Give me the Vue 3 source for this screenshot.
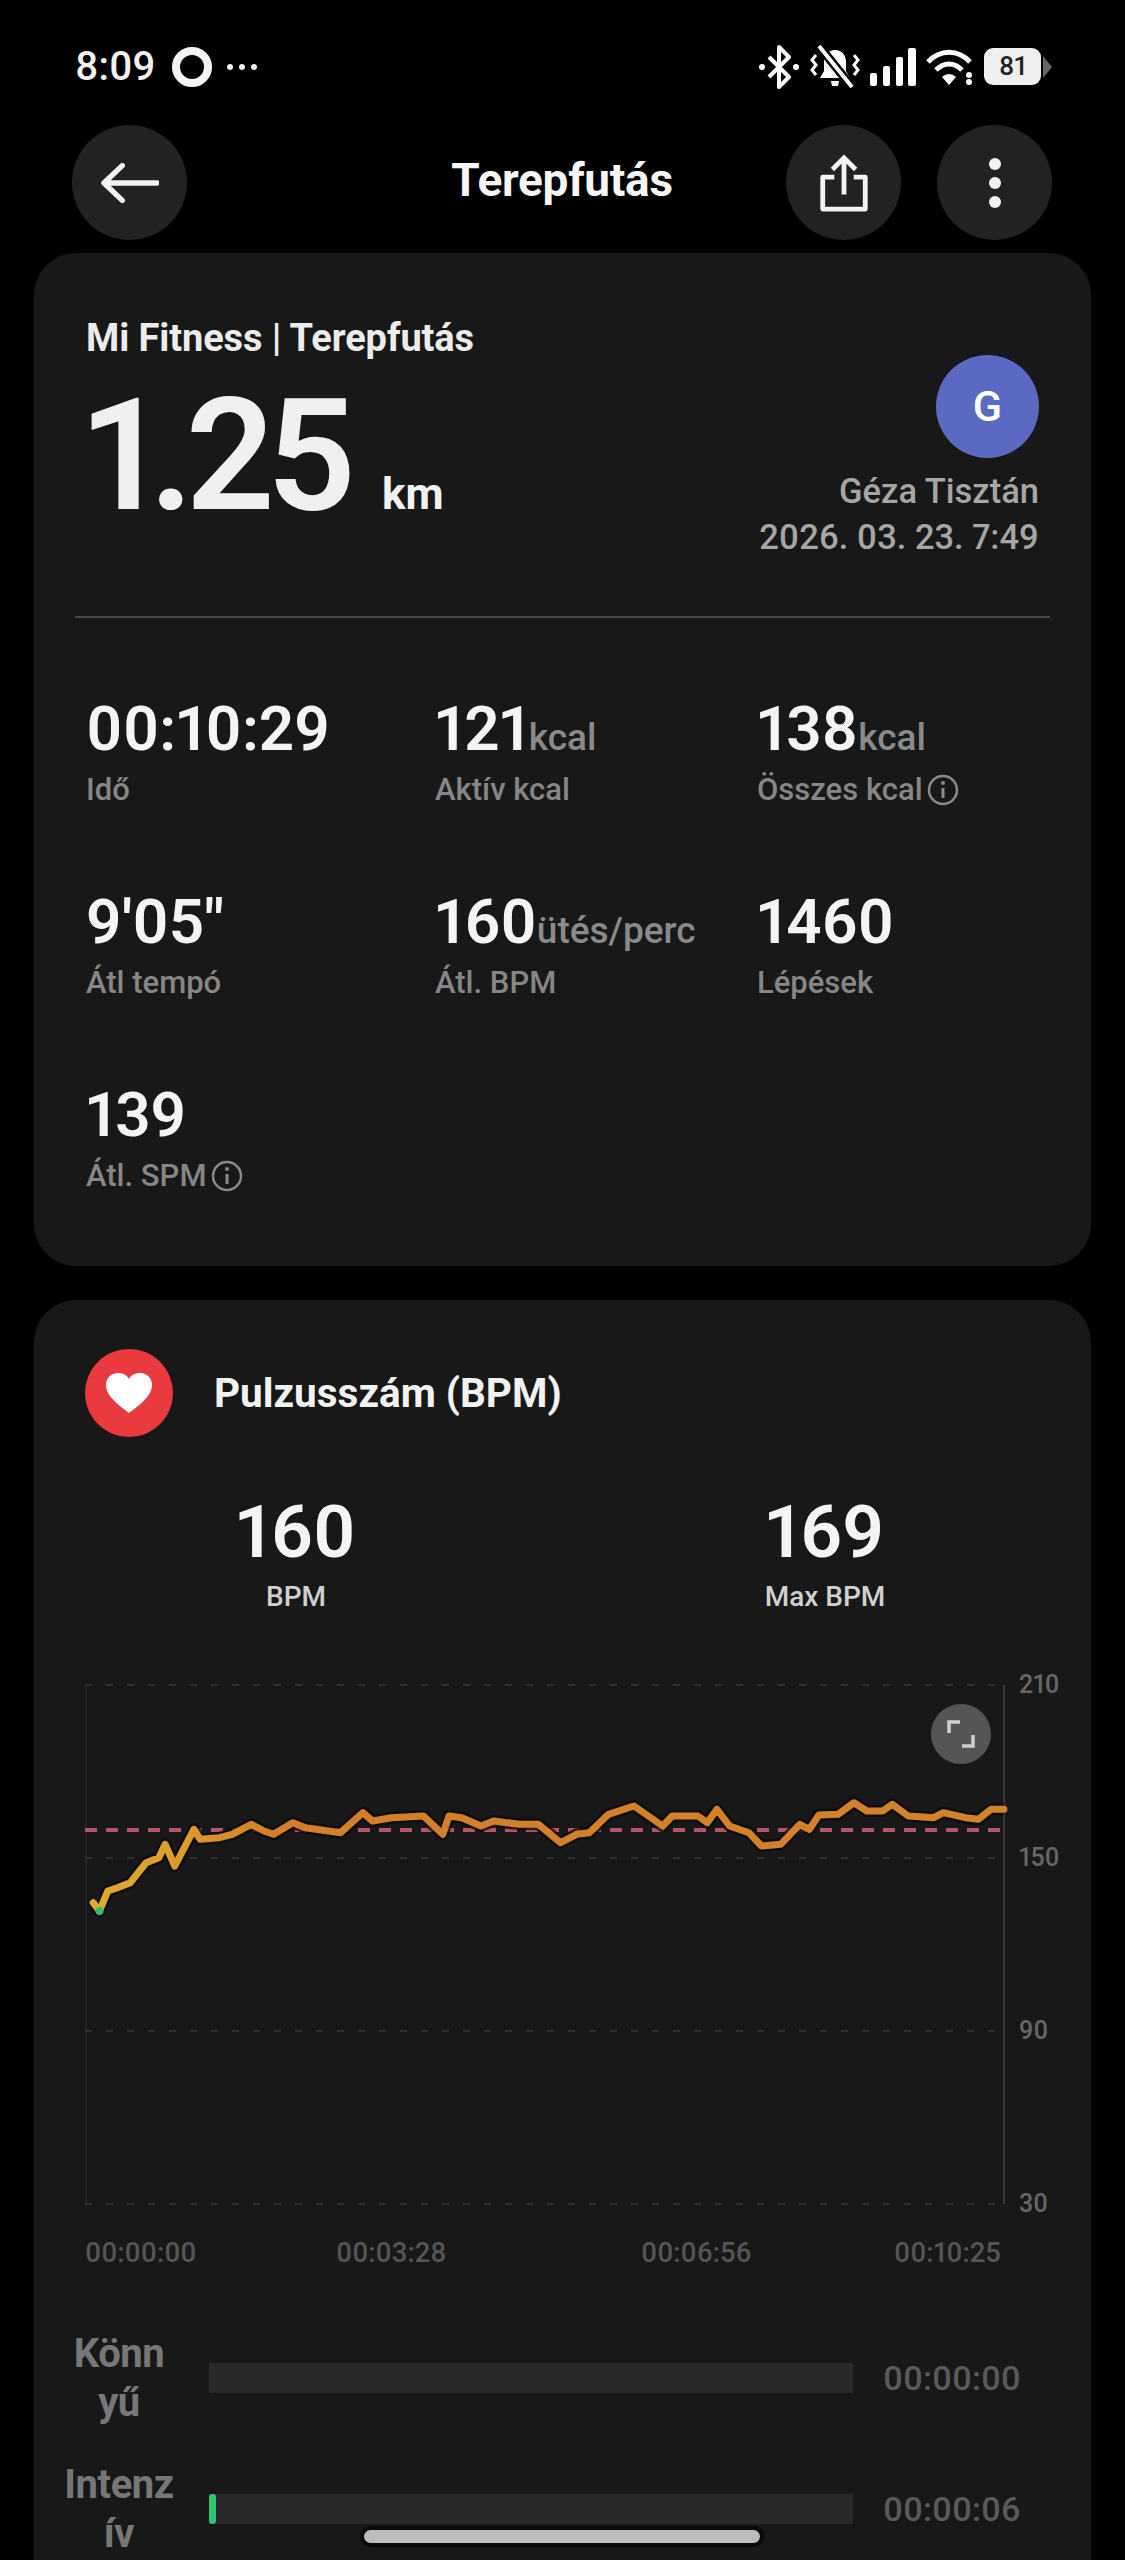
<script setup>
// hr curve, sampled along the chart: [x, y] inside the plot area
const raw = [[52,725],[62,750],[75,690],[90,680],[110,665],[135,605],[155,590],[165,550],[180,615],[210,505],[220,535],[250,530],[270,520],[300,490],[320,510],[335,520],[365,485],[385,500],[440,515],[475,455],[490,480],[520,470],[570,465],[600,520],[610,465],[630,470],[660,495],[680,480],[700,485],[720,490],[750,490],[785,545],[810,520],[830,515],[860,460],[900,435],[945,495],[960,465],[1000,465],[1015,485],[1030,445],[1050,495],[1080,515],[1100,555],[1130,550],[1160,490],[1175,505],[1190,462],[1220,460],[1245,425],[1265,450],[1290,450],[1305,430],[1330,465],[1370,470],[1385,455],[1420,470],[1440,475],[1460,445],[1480,445]]
const curve = raw.map(([x, y]) => `${(x / 1.568 - 25).toFixed(1)},${(y / 3 - 24).toFixed(1)}`).join(' ')

const stats = [
  { value: '00:10:29', label: 'Idő' },
  { value: '121', unit: 'kcal', label: 'Aktív kcal' },
  { value: '138', unit: 'kcal', label: 'Összes kcal', info: true },
  { value: "9'05\"", label: 'Átl tempó' },
  { value: '160', unit: 'ütés/perc', label: 'Átl. BPM' },
  { value: '1460', label: 'Lépések' },
  { value: '139', label: 'Átl. SPM', info: true }
]
const gridLines = [0, 173, 346, 519]
const yLabels = [210, 150, 90, 30]
const xLabels = ['00:00:00', '00:03:28', '00:06:56', '00:10:25']
const zones = [
  { name: 'Könn\nyű', time: '00:00:00', fill: 0 },
  { name: 'Intenz\nív', time: '00:00:06', fill: 7 }
]
</script>

<template>
  <div class="page">
    <div class="status">
      <div class="status-left">
        <span class="clock">8:09</span>
        <span class="ring"></span>
        <span class="dots"><i></i><i></i><i></i></span>
      </div>
      <div class="status-right">
        <svg width="42" height="44" viewBox="0 0 42 44" fill="none" stroke="#fff" stroke-width="4">
          <path d="M11 12 L31 32 L21 42 V2 L31 12 L11 32" stroke-linejoin="round" />
          <circle cx="4" cy="22" r="3" fill="#fff" stroke="none" />
          <circle cx="38" cy="22" r="3" fill="#fff" stroke="none" />
        </svg>
        <svg width="50" height="44" viewBox="0 0 50 44" fill="none">
          <path d="M25 5c-7 0-11 5-11 12v9l-4 7h30l-4-7v-9c0-7-4-12-11-12zM21 36h8l-1 5h-6z" fill="#fff" />
          <path d="M6 10l-4 5 4 5-4 5 4 5M44 10l4 5-4 5 4 5-4 5" stroke="#fff" stroke-width="3" />
          <path d="M9 1l33 41" stroke="#000" stroke-width="9" />
          <path d="M9 1l33 41" stroke="#fff" stroke-width="4" />
        </svg>
        <svg width="46" height="38" viewBox="0 0 46 38" fill="#fff">
          <rect x="0" y="25" width="7" height="13" rx="2" />
          <rect x="13" y="18" width="7" height="20" rx="2" />
          <rect x="26" y="9" width="7" height="29" rx="2" />
          <rect x="38" y="0" width="8" height="38" rx="2" />
        </svg>
        <svg width="48" height="38" viewBox="0 0 48 38" fill="none" stroke="#fff" stroke-width="5">
          <path d="M2 14C14 1 32 1 44 14" />
          <path d="M10 22c8-8 18-8 26 0" />
          <path d="M16 29c5-4 9-4 14 0l-7 8z" fill="#fff" stroke="none" />
          <circle cx="43" cy="27" r="3" fill="#fff" stroke="none" />
          <circle cx="43" cy="34" r="3" fill="#fff" stroke="none" />
        </svg>
        <span class="battery">81</span>
        <span class="nub"></span>
      </div>
    </div>

    <div class="nav">
      <div class="nav-side">
        <button class="round">
          <svg width="58" height="42" viewBox="0 0 60 42" fill="none" stroke="#f2f2f2" stroke-width="5.5" stroke-linecap="round" stroke-linejoin="round">
            <path d="M22 3L3 21l19 18M4 21h54" />
          </svg>
        </button>
      </div>
      <div class="nav-title">Terepfutás</div>
      <div class="nav-side nav-right">
        <button class="round">
          <svg width="50" height="58" viewBox="0 0 50 60" fill="none" stroke="#f2f2f2" stroke-width="5">
            <path d="M15 24H3v33h44V24H35" stroke-linejoin="round" />
            <path d="M25 42V5M13 16L25 4l12 12" />
          </svg>
        </button>
        <button class="round">
          <svg width="14" height="52" viewBox="0 0 14 52" fill="#f2f2f2">
            <circle cx="7" cy="7" r="6" />
            <circle cx="7" cy="26" r="6" />
            <circle cx="7" cy="45" r="6" />
          </svg>
        </button>
      </div>
    </div>

    <section class="card summary">
      <div class="head">
        <div>
          <div class="source">Mi Fitness | Terepfutás</div>
          <div class="distance">
            <span class="distance-num">1.25</span>
            <span class="distance-unit">km</span>
          </div>
        </div>
        <div class="who">
          <div class="avatar">G</div>
          <div class="who-line who-name">Géza Tisztán</div>
          <div class="who-line">2026. 03. 23. 7:49</div>
        </div>
      </div>
      <div class="divider"></div>
      <div class="stats">
        <div v-for="s in stats" :key="s.label" class="stat">
          <div class="stat-value">{{ s.value }}<span v-if="s.unit" class="stat-unit">{{ s.unit }}</span></div>
          <div class="stat-label">
            {{ s.label }}
            <svg v-if="s.info" width="32" height="32" viewBox="0 0 32 32" fill="none" stroke="#8a8a8a" stroke-width="2.5">
              <circle cx="16" cy="16" r="14" />
              <path d="M16 14v10" stroke-width="3" />
              <circle cx="16" cy="9" r="2" fill="#8a8a8a" stroke="none" />
            </svg>
          </div>
        </div>
      </div>
    </section>

    <section class="card heart">
      <div class="heart-head">
        <div class="heart-badge">
          <svg width="46" height="40" viewBox="0 0 46 40" fill="#fff">
            <path d="M23 40C8 29 0 21 0 12 0 5 5 0 12 0c5 0 9 2 11 6 2-4 6-6 11-6 7 0 12 5 12 12 0 9-8 17-23 28z" />
          </svg>
        </div>
        <div class="heart-title">Pulzusszám (BPM)</div>
      </div>

      <div class="bpm">
        <div class="bpm-item">
          <div class="bpm-num">160</div>
          <div class="bpm-label">BPM</div>
        </div>
        <div class="bpm-item">
          <div class="bpm-num">169</div>
          <div class="bpm-label">Max BPM</div>
        </div>
      </div>

      <div class="chart">
        <svg class="plot" width="925" height="525" viewBox="0 -2 925 525" fill="none">
          <defs>
            <linearGradient id="hr" gradientUnits="userSpaceOnUse" x1="0" y1="0" x2="925" y2="0">
              <stop offset="0" stop-color="#f7bd2e" />
              <stop offset="0.11" stop-color="#f2ab2b" />
              <stop offset="0.2" stop-color="#e98a2a" />
              <stop offset="1" stop-color="#e88f2b" />
            </linearGradient>
          </defs>
          <line x1="1" y1="0" x2="1" y2="519" stroke="#242424" stroke-width="2" />
          <line x1="919" y1="0" x2="919" y2="519" stroke="#383838" stroke-width="2" />
          <line v-for="y in gridLines" :key="y" x1="0" :y1="y" x2="918" :y2="y" stroke="#303030" stroke-width="2" stroke-dasharray="7 14" />
          <line x1="0" y1="145" x2="920" y2="145" stroke="#b5556a" stroke-width="4" stroke-dasharray="12 9" />
          <polyline :points="curve" stroke="#0b0b0b" stroke-opacity="0.75" stroke-width="12" stroke-linejoin="round" />
          <polyline :points="curve" stroke="url(#hr)" stroke-opacity="0.9" stroke-width="7" stroke-linejoin="round" stroke-linecap="round" />
          <circle cx="14.5" cy="226" r="4" fill="#2fbf71" />
        </svg>
        <div class="y-axis">
          <span v-for="l in yLabels" :key="l">{{ l }}</span>
        </div>
        <div class="expand">
          <svg width="30" height="30" viewBox="0 0 30 30" fill="none" stroke="#cfcfcf" stroke-width="3.5">
            <path d="M3 14V3h11M27 16v11H16" />
          </svg>
        </div>
      </div>
      <div class="x-axis">
        <span v-for="l in xLabels" :key="l">{{ l }}</span>
      </div>

      <div class="zones">
        <div v-for="z in zones" :key="z.time" class="zone">
          <div class="zone-name">{{ z.name }}</div>
          <div class="zone-bar">
            <div class="zone-fill" :style="{ width: z.fill + 'px' }"></div>
          </div>
          <div class="zone-time">{{ z.time }}</div>
        </div>
      </div>
    </section>

    <div class="home"></div>
  </div>
</template>

<style>
html, body {
  margin: 0;
  background: #000;
}
</style>

<style scoped>
.page {
  position: relative;
  width: 1125px;
  height: 2560px;
  overflow: hidden;
  background: #000;
  color: #f2f2f2;
  font-family: Roboto, "Liberation Sans", sans-serif;
  font-weight: 500;
  font-variant-numeric: proportional-nums;
}

.status {
  height: 125px;
  box-sizing: border-box;
  padding: 8px 73px 0 75px;
  display: flex;
  align-items: center;
  justify-content: space-between;
}
.status-left,
.status-right {
  display: flex;
  align-items: center;
}
.clock {
  font-size: 40px;
}
.ring {
  width: 24px;
  height: 24px;
  margin-left: 16px;
  border: 8px solid #f4f4f4;
  border-radius: 50%;
}
.dots {
  display: flex;
  gap: 6px;
  margin-left: 15px;
}
.dots i {
  width: 6px;
  height: 6px;
  border-radius: 50%;
  background: #f0f0f0;
}
.status-right {
  gap: 10px;
}
.battery {
  width: 57px;
  height: 37px;
  border-radius: 9px;
  background: #efefef;
  color: #222;
  font-size: 26px;
  line-height: 37px;
  text-align: center;
}
.nub {
  width: 0;
  height: 0;
  margin-left: -8px;
  border-left: 9px solid #666;
  border-top: 11px solid transparent;
  border-bottom: 11px solid transparent;
}

.nav {
  height: 115px;
  padding: 0 73px 0 72px;
  display: grid;
  grid-template-columns: 1fr auto 1fr;
  align-items: center;
}
.nav-side {
  display: flex;
}
.nav-right {
  justify-content: flex-end;
  gap: 36px;
}
.nav-title {
  padding-bottom: 6px;
  font-size: 46px;
  font-weight: 700;
  letter-spacing: -0.3px;
  color: #f6f6f6;
}
.round {
  width: 115px;
  height: 115px;
  padding: 0;
  border: 0;
  border-radius: 50%;
  background: #222;
  display: flex;
  align-items: center;
  justify-content: center;
}

.card {
  margin: 0 34px;
  border-radius: 42px;
  background: #181818;
}
.summary {
  margin-top: 13px;
  padding: 63px 52px 70px;
}
.head {
  display: flex;
  justify-content: space-between;
}
.source {
  font-size: 38px;
  line-height: 44px;
  font-weight: 700;
  letter-spacing: -0.1px;
  color: #ececec;
}
.distance {
  margin-top: 18px;
  display: flex;
  align-items: baseline;
  gap: 34px;
}
.distance-num {
  margin-left: -2px;
  font-size: 156px;
  font-weight: 600;
  line-height: 156px;
  letter-spacing: -8px;
  color: #f0f0f0;
}
.distance-unit {
  font-size: 44px;
  font-weight: 700;
}
.who {
  padding-top: 39px;
  display: flex;
  flex-direction: column;
  align-items: flex-end;
}
.avatar {
  width: 103px;
  height: 103px;
  border-radius: 50%;
  background: #5c69c3;
  color: #fff;
  font-size: 43px;
  font-weight: 500;
  line-height: 103px;
  text-align: center;
}
.who-line {
  font-size: 34.5px;
  line-height: 46px;
  color: #a6a6a6;
}
.who-name {
  margin-top: 10px;
}
.divider {
  height: 2px;
  margin: 56px -11px 76px;
  background: #484848;
}
.stats {
  display: grid;
  grid-template-columns: 349px 322px 1fr;
  row-gap: 77px;
}
.stat {
  height: 116px;
}
.stat-value {
  font-size: 62px;
  font-weight: 600;
  line-height: 70px;
  color: #f4f4f4;
  white-space: nowrap;
}
.stat-unit {
  font-size: 37px;
  font-weight: 500;
  line-height: 1;
  color: #8a8a8a;
}
.stat-label {
  margin-top: 6px;
  font-size: 31px;
  line-height: 40px;
  color: #868686;
  display: flex;
  align-items: center;
  gap: 4px;
}

.heart {
  margin-top: 34px;
  height: 1400px;
  padding: 49px 50px 0 51px;
}
.heart-head {
  display: flex;
  align-items: center;
  gap: 41px;
}
.heart-badge {
  width: 88px;
  height: 88px;
  border-radius: 50%;
  background: #e83a3f;
  display: flex;
  align-items: center;
  justify-content: center;
}
.heart-title {
  font-size: 40.5px;
  font-weight: 700;
  color: #f2f2f2;
}
.bpm {
  margin-top: 57px;
  display: grid;
  grid-template-columns: 422px 422px;
  column-gap: 107px;
  text-align: center;
}
.bpm-num {
  font-size: 73px;
  font-weight: 600;
  line-height: 76px;
  color: #f4f4f4;
}
.bpm-label {
  margin-top: 9px;
  font-size: 28px;
  line-height: 36px;
  color: #d0d0d0;
}
.chart {
  position: relative;
  margin-top: 68px;
  display: flex;
}
.plot {
  flex: none;
  display: block;
}
.y-axis {
  height: 547px;
  margin-top: -12px;
  padding-left: 9px;
  display: flex;
  flex-direction: column;
  justify-content: space-between;
  font-size: 25px;
  line-height: 28px;
  color: #666;
}
.expand {
  position: absolute;
  top: 21px;
  left: 846px;
  width: 60px;
  height: 60px;
  border-radius: 50%;
  background: #555;
  display: flex;
  align-items: center;
  justify-content: center;
}
.x-axis {
  margin-top: 19px;
  display: grid;
  grid-template-columns: 251px 305px 253px auto;
  font-size: 27.5px;
  line-height: 32px;
  color: #555;
}
.zones {
  margin: 60px 0 0 -26px;
  display: flex;
  flex-direction: column;
  gap: 33px;
}
.zone {
  display: flex;
  align-items: center;
}
.zone-name {
  width: 120px;
  font-size: 40px;
  font-weight: 700;
  line-height: 49px;
  letter-spacing: -0.4px;
  color: #777;
  text-align: center;
  white-space: pre;
}
.zone-bar {
  width: 644px;
  height: 30px;
  margin-left: 30px;
  background: #292929;
}
.zone-fill {
  height: 100%;
  background: #2fc374;
  border-radius: 3px;
}
.zone-time {
  margin-left: 30px;
  font-size: 34px;
  color: #5a5a5a;
}
.home {
  position: absolute;
  left: 364px;
  bottom: 17px;
  width: 396px;
  height: 13px;
  border-radius: 7px;
  background: #bdbdbd;
  box-shadow: 0 0 0 4px #0a0a0a;
}
</style>
